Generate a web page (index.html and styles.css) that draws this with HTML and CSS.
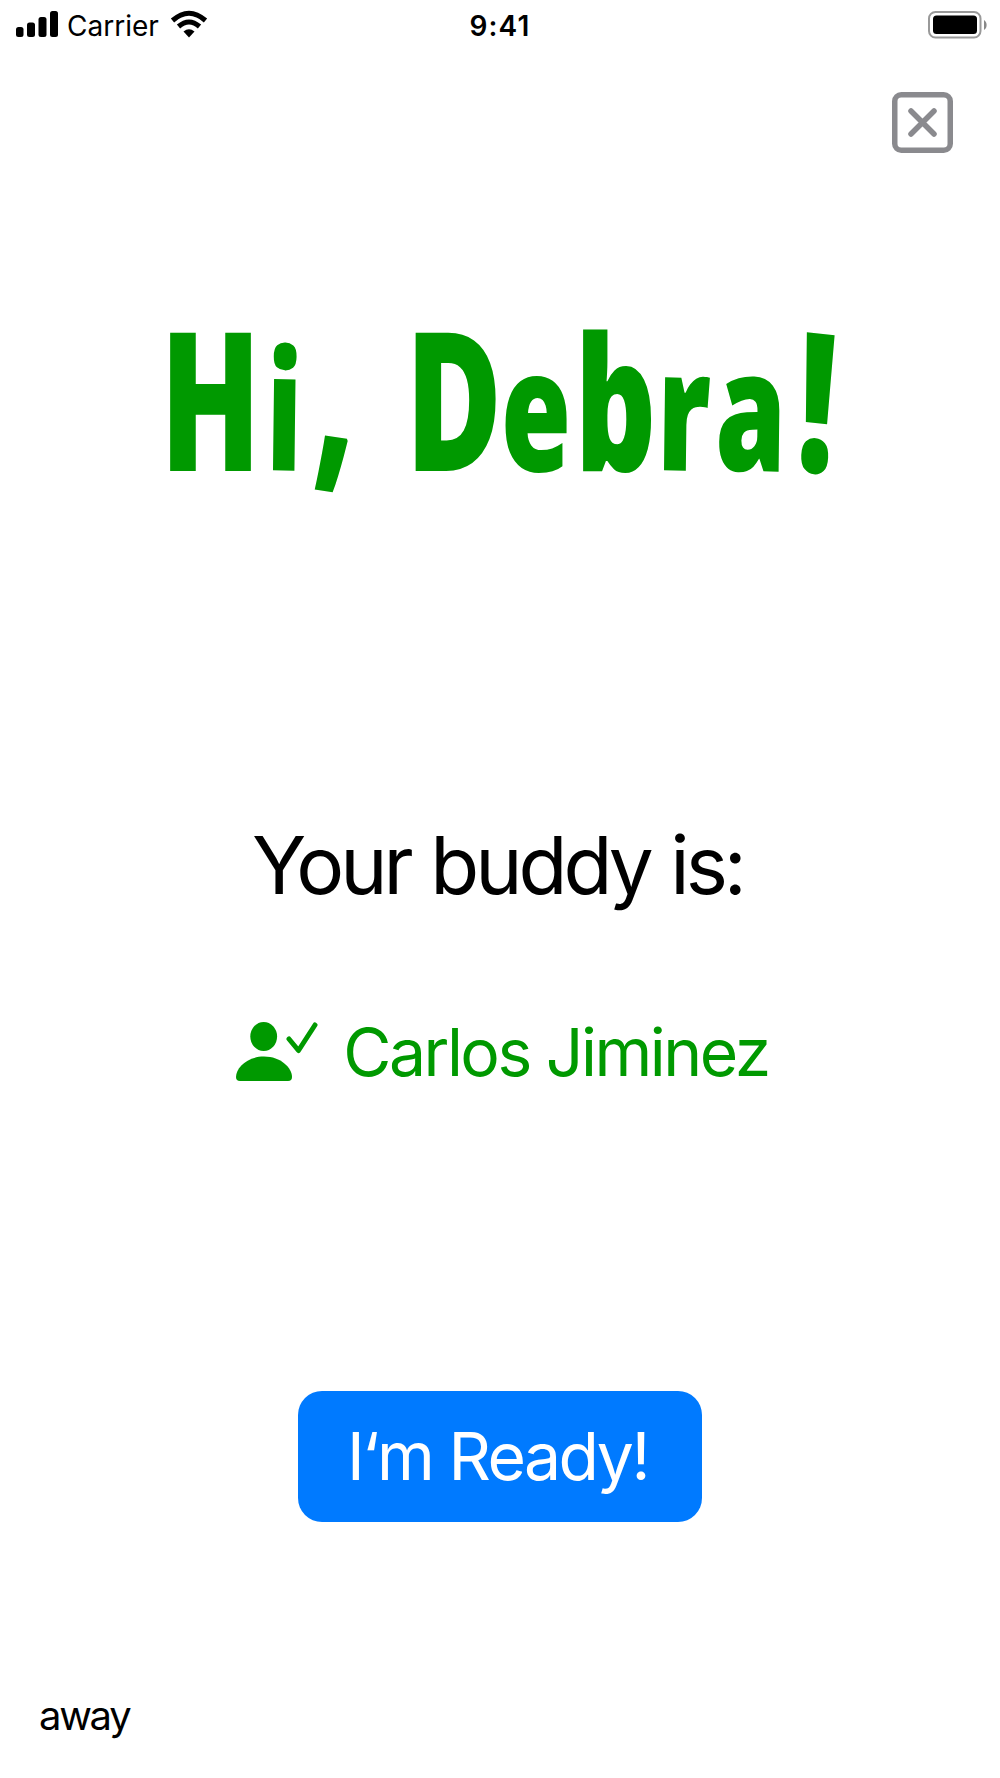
FILE: index.html
```
<!DOCTYPE html>
<html lang="en">

<head>
    <meta charset="UTF-8">
    <meta name="viewport" content="width=device-width, initial-scale=1.0">
    <title>Your Buddy</title>
    <link rel="stylesheet" href="styles.css">
</head>

<body>
    <div class="screen">
        <header class="status-bar">
            <div class="status-left">
                <svg class="signal" width="42" height="26" viewBox="0 0 42 26">
                    <rect x="0" y="16" width="7.5" height="10" rx="2.5" />
                    <rect x="11" y="11.5" width="8" height="14.5" rx="2.5" />
                    <rect x="22.5" y="6" width="8" height="20" rx="2.5" />
                    <rect x="34" y="0" width="8" height="26" rx="2.5" />
                </svg>
                <span class="carrier">Carrier</span>
                <svg class="wifi" width="38" height="28" viewBox="0 0 38 28">
                    <path d="M2.5 10.5Q19-4 35.5 10.5" />
                    <path d="M8.5 16.5Q19 7.5 29.5 16.5" />
                    <path class="dot" d="M13.5 21.5Q19 17 24.5 21.5L19 27.5Z" />
                </svg>
            </div>
            <span class="time">9:41</span>
            <svg class="battery" width="60" height="28" viewBox="0 0 60 28">
                <rect class="shell" x="1" y="1" width="51.5" height="25.5" rx="6.5" />
                <rect x="5" y="4.5" width="44" height="18.5" rx="3.5" />
                <path class="cap" d="M56 9C59.5 11 59.5 17 56 19Z" />
            </svg>
        </header>
        <div class="toolbar">
            <button class="close" type="button" aria-label="Close">
                <svg width="62" height="62" viewBox="0 0 62 62">
                    <rect x="2.75" y="2.75" width="55.5" height="55.5" rx="6.5" />
                    <path d="M19 19L42 42M42 19L19 42" />
                </svg>
            </button>
        </div>
        <h1 class="greeting">
            <svg width="680" height="200" viewBox="0 0 680 200">
                <text transform="translate(0 161) scale(.68 1)" x="0 155 225 310 361 501 610 730 816 934" y="0 -1 -9 0 0 0 0 -1 -1 -1" rotate="0 1 6 0 0 0 0 1 1 4">H<tspan class="short">i</tspan>, D<tspan class="low">e</tspan><tspan class="tall">b</tspan><tspan class="low">ra</tspan>!</text>
            </svg>
        </h1>
        <p class="prompt">Your buddy is:</p>
        <div class="buddy">
            <svg class="buddy-icon" width="82" height="60" viewBox="0 0 82 60">
                <ellipse cx="27.7" cy="14.5" rx="13.4" ry="14.5" />
                <path d="M4 59Q0 59 0 55C0 46 11 34.5 28 34.5S56 46 56 55Q56 59 52 59Z" />
                <path class="check" d="M53 17L62.5 28.5L79 3" />
            </svg>
            <span class="buddy-name">Carlos Jiminez</span>
        </div>
        <button class="ready" type="button">I‘m Ready!</button>
        <footer class="status">away</footer>
    </div>
</body>

</html>
```
FILE: styles.css
```
body {
    font-family: Inter, 'Liberation Sans', sans-serif;
    background-color: #fff;
    color: #000;
    margin: 0;
}

.screen {
    display: flex;
    flex-direction: column;
    align-items: center;
    height: 1778px;
}

.status-bar {
    display: grid;
    grid-template-columns: 1fr auto 1fr;
    align-items: center;
    box-sizing: border-box;
    width: 100%;
    height: 50px;
    padding: 0 12px 0 16px;
}

.status-left {
    display: flex;
    align-items: center;
}

.signal {
    margin-top: -2px;
}

.carrier {
    font-size: 28px;
    margin: 1px 0 0 9px;
}

.wifi {
    margin: -2px 0 0 11px;
}

.wifi path {
    fill: none;
    stroke: #000;
    stroke-width: 5;
}

.wifi .dot {
    fill: #000;
    stroke: none;
}

.time {
    font-size: 28px;
    font-weight: 600;
    letter-spacing: 1.2px;
    padding: 1px 4px 0 0;
}

.battery {
    justify-self: end;
    margin-top: -1px;
}

.battery .shell {
    fill: none;
    stroke: #999;
    stroke-width: 2;
}

.battery .cap {
    fill: #888;
}

.toolbar {
    display: flex;
    justify-content: flex-end;
    box-sizing: border-box;
    width: 100%;
    padding: 42px 46px 0 0;
}

button {
    font-family: inherit;
    border: none;
    padding: 0;
    cursor: pointer;
}

.close {
    display: flex;
    background: none;
}

.close svg {
    fill: none;
    stroke: #8a8a8e;
    stroke-width: 5.5;
    stroke-linecap: round;
}

.greeting {
    width: 680px;
    height: 200px;
    margin: 156px 0 0;
}

.greeting svg {
    display: block;
    overflow: visible;
}

.greeting text {
    font-family: 'Open Sans', sans-serif;
    font-size: 194px;
    font-weight: 800;
    fill: #009900;
}

.greeting .low {
    font-size: 168px;
}

.greeting .tall {
    font-size: 187px;
}

.greeting .short {
    font-size: 165px;
}

.prompt {
    font-size: 80px;
    line-height: 100px;
    letter-spacing: -4px;
    word-spacing: 2px;
    padding-right: 5px;
    margin: 305px 0 0;
}

.buddy {
    display: flex;
    align-items: center;
    color: #009900;
    padding-left: 5px;
    margin-top: 97px;
}

.buddy-icon {
    fill: #009900;
}

.buddy-icon .check {
    fill: none;
    stroke: #009900;
    stroke-width: 5;
    stroke-linecap: round;
    stroke-linejoin: round;
}

.buddy-name {
    font-size: 66px;
    line-height: 80px;
    letter-spacing: -2.5px;
    margin-left: 25px;
}

.ready {
    width: 404px;
    height: 131px;
    margin-top: 299px;
    padding: 0 5px 2px 0;
    background-color: #007aff;
    color: #fff;
    border-radius: 24px;
    font-size: 66px;
    letter-spacing: -2.5px;
}

.status {
    align-self: flex-start;
    font-size: 40px;
    line-height: 50px;
    letter-spacing: -2.3px;
    margin: 169px 0 0 39px;
}
```
